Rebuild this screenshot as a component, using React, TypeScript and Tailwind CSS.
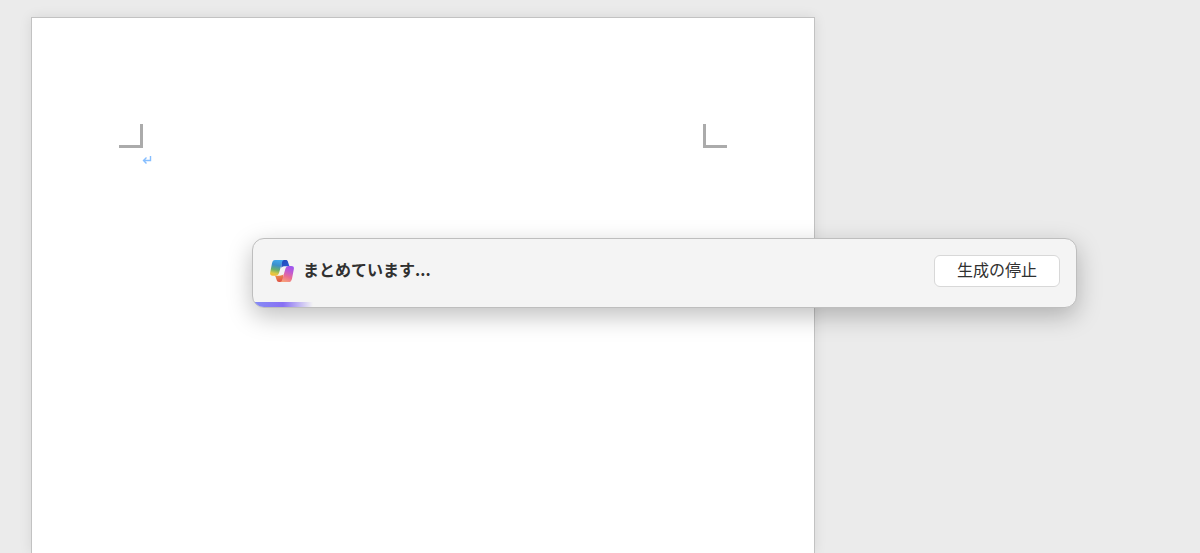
function CopilotLogo() {
  return (
    <svg viewBox="0 0 72 66" className="h-[22px] w-6 shrink-0" aria-hidden="true">
      <defs>
        <linearGradient id="cool" x1="0.6" y1="0" x2="0.4" y2="1">
          <stop offset="0" stopColor="#43a9ee" />
          <stop offset="0.35" stopColor="#3c8fcb" />
          <stop offset="0.65" stopColor="#6db168" />
          <stop offset="0.88" stopColor="#dfc944" />
          <stop offset="1" stopColor="#f4bd35" />
        </linearGradient>
        <linearGradient id="warm" x1="0.7" y1="0" x2="0.35" y2="1">
          <stop offset="0" stopColor="#9d55ee" />
          <stop offset="0.35" stopColor="#c35bce" />
          <stop offset="0.65" stopColor="#ea6c92" />
          <stop offset="1" stopColor="#f7a07a" />
        </linearGradient>
        <linearGradient id="navy" x1="0" y1="0" x2="1" y2="1">
          <stop offset="0" stopColor="#2048b8" />
          <stop offset="1" stopColor="#2a62d6" />
        </linearGradient>
        <linearGradient id="ember" x1="0" y1="0" x2="0.4" y2="1">
          <stop offset="0" stopColor="#f0a04a" />
          <stop offset="1" stopColor="#df5548" />
        </linearGradient>
      </defs>
      <path d="M34 0h13c4 0 6 2 7 6l3 9c1 3 2 4 4 4H46c-6 0-9 1-12 4Z" fill="url(#navy)" />
      <path d="M38 66H27c-4 0-6-2-7-6l-3-9c-1-3-2-4-5-4h16c6 0 9-1 12-4Z" fill="url(#ember)" />
      <path d="M15 0h28c-4 0-6 3-7 8l-9 31c-2 6-5 8-10 8H8c-7 0-9-4-7-12L6 10C8 3 10 0 15 0Z" fill="url(#cool)" />
      <path d="M57 66H30c4 0 6-3 7-8l9-31c2-6 5-9 10-9h8c7 0 9 4 7 12l-5 26c-2 7-4 10-9 10Z" fill="url(#warm)" />
    </svg>
  );
}

function ReturnMark() {
  return (
    <svg viewBox="0 0 10 10" className="ml-[23px] mt-[7px] size-[10px]" fill="none" stroke="#86beff" strokeWidth="1.4" aria-hidden="true">
      <path d="M8.5 1v4.5H1.5M4.5 2.5l-3 3 3 3" />
    </svg>
  );
}

function GeneratingPanel() {
  return (
    <section
      aria-label="Copilot"
      className="absolute left-[252px] top-[238px] flex w-[825px] flex-col overflow-hidden rounded-xl border border-[#bebebe] bg-[#f4f4f4] shadow-[0_8px_24px_rgba(0,0,0,0.25)]"
    >
      <div className="flex items-center gap-[9px] pb-[15px] pl-[17px] pr-4 pt-4">
        <CopilotLogo />
        <p role="status" className="pb-1 text-base font-bold leading-6 text-[#303030]">
          まとめています...
        </p>
        <button
          type="button"
          className="ml-auto h-8 w-[126px] rounded-md border border-[#d8d8d8] bg-white pb-1 text-base leading-6 text-[#303030]"
        >
          生成の停止
        </button>
      </div>
      <div className="h-[5px]">
        <div className="h-full w-[60px] bg-linear-to-r from-[#858df5] via-[#8870f4] via-50% to-transparent" />
      </div>
    </section>
  );
}

export default function App() {
  return (
    <main className="relative h-screen overflow-hidden bg-[#ebebeb] pl-[31px] pt-[17px] font-['Noto_Sans_CJK_JP',sans-serif]">
      <article className="h-full w-[784px] border border-b-0 border-[#c2c2c2] bg-white px-[87px] pt-[106px] shadow-[0_0_12px_rgba(0,0,0,0.09)]">
        <div className="flex justify-between">
          <div className="size-6 border-b-3 border-r-3 border-[#ababab]" />
          <div className="size-6 border-b-3 border-l-3 border-[#ababab]" />
        </div>
        <ReturnMark />
      </article>
      <GeneratingPanel />
    </main>
  );
}
